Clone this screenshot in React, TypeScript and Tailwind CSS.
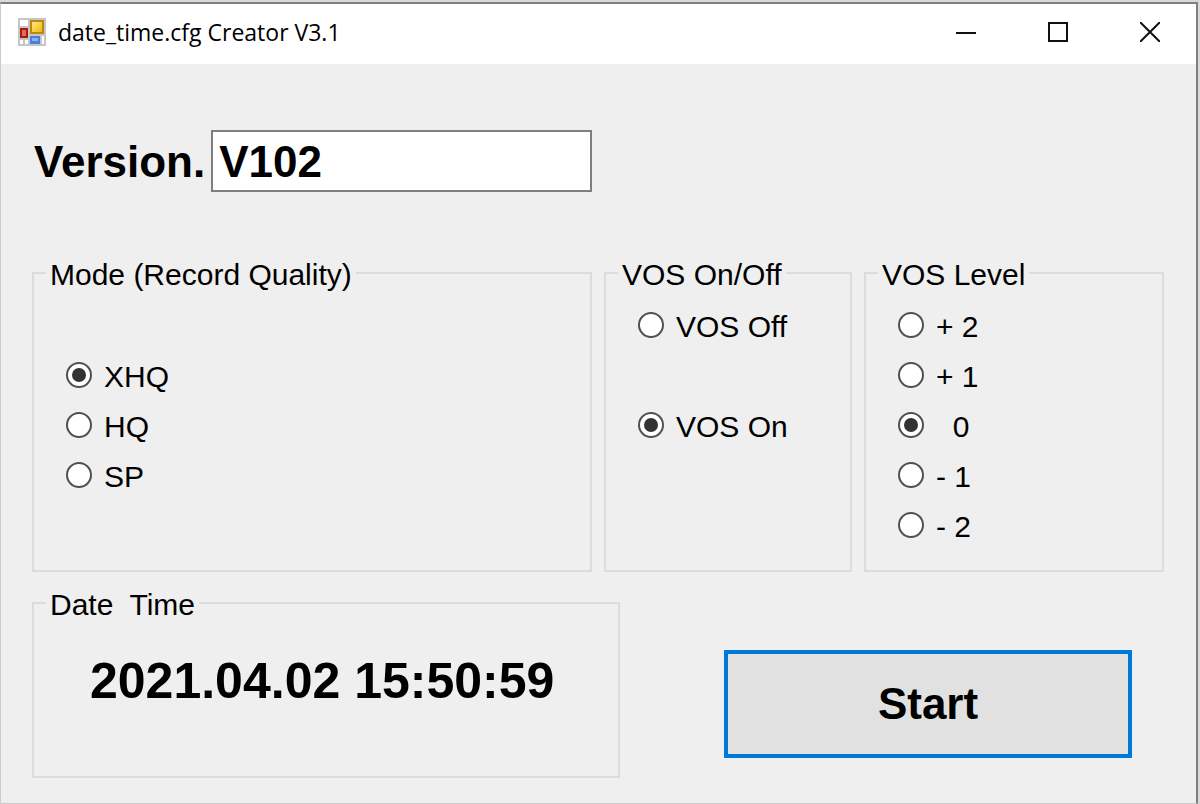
import { useState } from 'react';
import type { ReactNode } from 'react';

interface Option {
  value: string;
  label: string;
  row: string;
}

const MODES: Option[] = [
  { value: 'xhq', label: 'XHQ', row: 'row-start-2' },
  { value: 'hq', label: 'HQ', row: 'row-start-3' },
  { value: 'sp', label: 'SP', row: 'row-start-4' }
];

const VOS_STATES: Option[] = [
  { value: 'off', label: 'VOS Off', row: 'row-start-1' },
  { value: 'on', label: 'VOS On', row: 'row-start-3' }
];

const VOS_LEVELS: Option[] = [
  { value: '2', label: '+ 2', row: 'row-start-1' },
  { value: '1', label: '+ 1', row: 'row-start-2' },
  { value: '0', label: '  0', row: 'row-start-3' },
  { value: '-1', label: '- 1', row: 'row-start-4' },
  { value: '-2', label: '- 2', row: 'row-start-5' }
];

function AppIcon() {
  return (
    <svg className="size-7 shrink-0" viewBox="0 0 28 28" aria-hidden="true">
      <defs>
        <linearGradient id="gold" x1="0" y1="0" x2="1" y2="1">
          <stop offset="0" stopColor="#ffe88a" />
          <stop offset="1" stopColor="#f3b70c" />
        </linearGradient>
      </defs>
      <rect width="28" height="28" fill="#c6c6c6" />
      <rect x="2" y="2" width="8" height="6" fill="#fff" />
      <rect x="2" y="22" width="3" height="4" fill="#fff" />
      <rect x="7" y="22" width="3" height="4" fill="#fff" />
      <rect x="24" y="18" width="2" height="8" fill="#fff" />
      <rect x="12" y="2" width="14" height="14" fill="#b98a0c" />
      <rect x="14" y="4" width="10" height="10" fill="url(#gold)" />
      <rect x="2" y="10" width="8" height="10" fill="#a81c10" />
      <rect x="4" y="12" width="4" height="6" fill="#e2695c" />
      <rect x="12" y="18" width="10" height="8" fill="#4a7fd6" />
      <rect x="14" y="20" width="6" height="3" fill="#86b2f2" />
    </svg>
  );
}

function GroupBox({ title, children }: { title: string; children: ReactNode }) {
  return (
    <fieldset className="min-w-0 border-2 border-[#dcdcdc]">
      <legend className="ml-3 whitespace-pre px-1 pt-1 text-[30px] leading-[34px]">{title}</legend>
      {children}
    </fieldset>
  );
}

interface RadioListProps {
  name: string;
  options: Option[];
  value: string;
  onChange: (value: string) => void;
}

function RadioList({ name, options, value, onChange }: RadioListProps) {
  return (
    <div className="grid grid-rows-[repeat(5,50px)] px-8 pt-2 pb-5">
      {options.map((option) => (
        <label key={option.value} className={`flex items-center gap-3 ${option.row}`}>
          <input
            type="radio"
            name={name}
            value={option.value}
            checked={value === option.value}
            onChange={() => onChange(option.value)}
            className="grid size-[26px] shrink-0 appearance-none place-items-center rounded-full border-2 border-[#505050] bg-white checked:before:size-[14px] checked:before:rounded-full checked:before:bg-[#333333]"
          />
          <span className="whitespace-pre pt-1 text-[30px] leading-[34px]">{option.label}</span>
        </label>
      ))}
    </div>
  );
}

export default function App() {
  const [version, setVersion] = useState('V102');
  const [mode, setMode] = useState('xhq');
  const [vos, setVos] = useState('on');
  const [level, setLevel] = useState('0');

  return (
    <div className="flex min-h-screen bg-[#d9d9d9] pt-0.5 pr-0.5 font-['Liberation_Sans',Arial,sans-serif] text-black">
      <div className="flex flex-1 flex-col border-t-2 border-r-2 border-b border-l border-t-[#7f7f7f] border-r-[#7f7f7f] border-b-[#cccccc] border-l-[#cccccc] bg-[#efefef]">
        {/* Title bar */}
        <header className="flex h-[60px] items-stretch bg-white pb-1 pl-[17px]">
          <div className="flex flex-1 items-center gap-3">
            <AppIcon />
            <h1 className="font-['Open_Sans','Noto_Sans',sans-serif] text-[23px] leading-8">date_time.cfg Creator V3.1</h1>
          </div>
          <button type="button" aria-label="Minimize" className="flex w-[92px] items-center justify-center">
            <svg className="size-5" viewBox="0 0 20 20" stroke="#111" strokeWidth="2">
              <path d="M0 11h20" />
            </svg>
          </button>
          <button type="button" aria-label="Maximize" className="flex w-[92px] items-center justify-center">
            <svg className="size-5" viewBox="0 0 20 20" fill="none" stroke="#111" strokeWidth="2">
              <path d="M1 1h18v18H1z" />
            </svg>
          </button>
          <button type="button" aria-label="Close" className="flex w-[92px] items-center justify-center">
            <svg className="size-5" viewBox="0 0 20 20" stroke="#111" strokeWidth="2">
              <path d="M0 0l20 20M20 0L0 20" />
            </svg>
          </button>
        </header>

        <main className="flex flex-1 flex-col pt-[66px] pr-8 pb-6 pl-[31px]">
          {/* Version and record settings */}
          <div className="grid grid-cols-[minmax(0,560fr)_minmax(0,248fr)_minmax(0,300fr)] gap-x-3">
            <div className="mb-[62px] flex items-center gap-1.5 pl-0.5">
              <label htmlFor="version" className="pt-0.5 text-[44px] leading-[50px] font-bold">
                Version.
              </label>
              <input
                id="version"
                type="text"
                value={version}
                onChange={(e) => setVersion(e.target.value)}
                className="h-[62px] min-w-0 flex-1 border-2 border-[#7f7f7f] bg-white px-1.5 pt-0.5 text-[44px] leading-[50px] font-bold outline-none"
              />
            </div>
            <div className="col-span-2" />
            <GroupBox title="Mode (Record Quality)">
              <RadioList name="mode" options={MODES} value={mode} onChange={setMode} />
            </GroupBox>
            <GroupBox title="VOS On/Off">
              <RadioList name="vos" options={VOS_STATES} value={vos} onChange={setVos} />
            </GroupBox>
            <GroupBox title="VOS Level">
              <RadioList name="level" options={VOS_LEVELS} value={level} onChange={setLevel} />
            </GroupBox>
          </div>

          {/* Clock and start button */}
          <div className="mt-3 grid grid-cols-[minmax(0,588fr)_minmax(0,408fr)] items-start gap-x-[104px] pr-8">
            <GroupBox title="Date  Time">
              <div className="px-14 pt-7 pb-16">
                <time dateTime="2021-04-02T15:50:59" className="block text-[50px] leading-[62px] font-bold whitespace-nowrap">
                  2021.04.02 15:50:59
                </time>
              </div>
            </GroupBox>
            <button
              type="button"
              className="mt-[66px] h-[108px] border-4 border-[#0078d7] bg-[#e1e1e1] text-[44px] leading-[50px] font-bold"
            >
              Start
            </button>
          </div>
        </main>
      </div>
    </div>
  );
}
